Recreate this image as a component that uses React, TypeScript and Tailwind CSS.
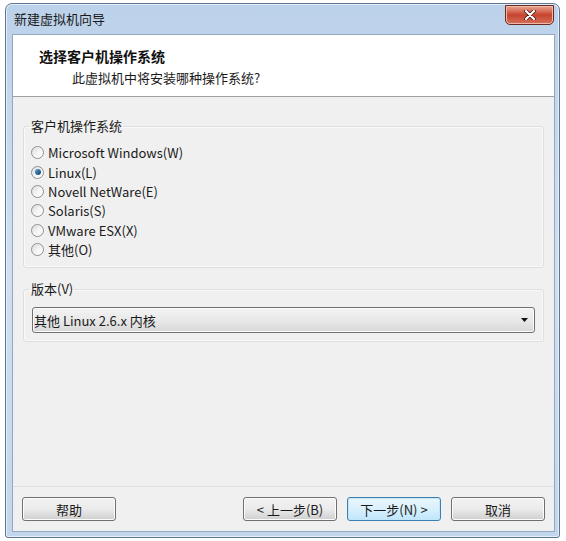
import React from 'react';

// Windows 7 style "new virtual machine" wizard page

const font = { fontFamily: '"Noto Sans CJK SC", "Noto Sans", sans-serif' };

const osList = [
  'Microsoft Windows(W)',
  'Linux(L)',
  'Novell NetWare(E)',
  'Solaris(S)',
  'VMware ESX(X)',
  '其他(O)',
];

const Radio: React.FC<{ label: string; checked?: boolean }> = ({ label, checked }) => (
  <label className="flex items-center h-[19.4px] gap-[4px]">
    <span className="w-[13px] h-[13px] rounded-full border border-[#8e8f8f] bg-gradient-to-br from-[#d6d6d6] via-[#f4f4f4] to-white flex items-center justify-center shadow-[inset_0_0_1px_#fff]">
      {checked && (
        <span className="w-[6px] h-[6px] rounded-full bg-gradient-to-br from-[#5aa0d8] to-[#0f3d6e]" />
      )}
    </span>
    <span className="text-[13px] text-[#1a1a1a] leading-none">{label}</span>
  </label>
);

const WinButton: React.FC<{ label: string; primary?: boolean }> = ({ label, primary }) => (
  <button
    className={`w-[94px] h-[24px] rounded-[3px] border text-[13px] text-[#1a1a1a] leading-none flex items-center justify-center ${
      primary
        ? 'border-[#3c7fb1] bg-gradient-to-b from-[#eaf6fd] via-[#d9f0fc] to-[#bee6fd] shadow-[inset_0_0_0_1px_#c4e5f6]'
        : 'border-[#707070] bg-gradient-to-b from-[#f2f2f2] via-[#ebebeb] to-[#cfcfcf] shadow-[inset_0_0_0_1px_#fcfcfc]'
    }`}
  >
    {label}
  </button>
);

export default function App() {
  return (
    <div className="w-[566px] h-[541px] bg-white pl-[5px] pt-[3px]" style={font}>
      <div className="w-[555px] h-[535px] flex flex-col rounded-t-[7px] rounded-b-[3px] border border-[#5f7591] bg-gradient-to-b from-[#bcd2ea] via-[#cfe0f2] to-[#c2d7ec] shadow-[inset_0_0_0_1px_#e6eff9]">
        {/* title bar */}
        <div className="h-[30px] flex items-start justify-between pl-[8px] pr-[5px]">
          <span className="text-[13px] text-[#1a1a1a] mt-[8px] leading-none">新建虚拟机向导</span>
          <div className="mt-[1px] w-[49px] h-[20px] rounded-b-[5px] border border-[#6b2b23] bg-gradient-to-b from-[#e8a493] via-[#c7432c] to-[#d3705a] flex items-center justify-center shadow-[inset_0_0_0_1px_#f0b9a8]">
            <svg width="12" height="10" viewBox="0 0 12 10">
              <path d="M2 1 L10 9 M10 1 L2 9" stroke="#3b1510" strokeWidth="3.6" strokeLinecap="round" />
              <path d="M2 1 L10 9 M10 1 L2 9" stroke="#fff" strokeWidth="2.2" strokeLinecap="round" />
            </svg>
          </div>
        </div>

        {/* client area */}
        <div className="flex-1 ml-[6px] mr-[4px] mb-[5px] flex flex-col border border-[#93a8c0] bg-[#f0f0f0]">
          {/* header */}
          <div className="h-[62px] bg-white border-b border-[#a0a0a0] pl-[26px] pt-[14px]">
            <div className="text-[14px] font-bold text-[#111] leading-none">选择客户机操作系统</div>
            <div className="text-[13px] text-[#1a1a1a] leading-none mt-[8px] ml-[33px]">此虚拟机中将安装哪种操作系统?</div>
          </div>

          {/* body */}
          <div className="flex-1 px-[10px] pt-[21px]">
            <fieldset className="border border-[#dcdfe2] rounded-[3px] px-0 pt-[9px] pb-[8px] shadow-[inset_0_0_0_1px_#fafafa]">
              <legend className="ml-[6px] px-[1px] text-[13px] text-[#1a1a1a] leading-[16px]">客户机操作系统</legend>
              <div className="pl-[7px]">
                {osList.map((os, i) => (
                  <Radio key={os} label={os} checked={i === 1} />
                ))}
              </div>
            </fieldset>

            <fieldset className="mt-[13px] border border-[#dcdfe2] rounded-[3px] px-[8px] pt-[10px] pb-[8px] shadow-[inset_0_0_0_1px_#fafafa]">
              <legend className="-ml-[2px] px-[1px] text-[13px] text-[#1a1a1a] leading-[16px]">版本(V)</legend>
              <div className="h-[26px] rounded-[3px] border border-[#707070] bg-gradient-to-b from-[#f3f3f3] via-[#e9e9e9] to-[#d8d8d8] flex items-center justify-between pl-[1px] pr-[6px] shadow-[inset_0_0_0_1px_#fbfbfb]">
                <span className="text-[13px] text-[#1a1a1a] leading-none">其他 Linux 2.6.x 内核</span>
                <svg width="7" height="4" viewBox="0 0 7 4">
                  <path d="M0 0 H7 L3.5 4 Z" fill="#111" />
                </svg>
              </div>
            </fieldset>
          </div>

          {/* button row */}
          <div className="border-t border-[#dfdfdf] px-[9px] py-[10px] flex items-center">
            <WinButton label="帮助" />
            <div className="flex-1" />
            <div className="flex gap-[10px]">
              <WinButton label="< 上一步(B)" />
              <WinButton label="下一步(N) >" primary />
              <WinButton label="取消" />
            </div>
          </div>
        </div>
      </div>
    </div>
  );
}
